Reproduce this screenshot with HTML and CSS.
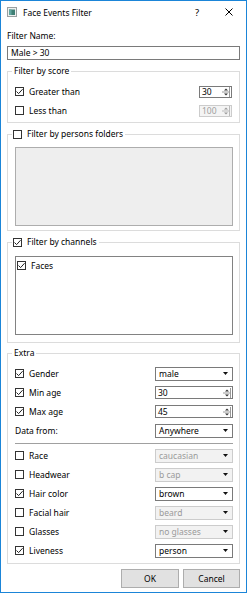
FILE: index.html
```html
<!DOCTYPE html>
<html>
<head>
<meta charset="utf-8">
<link rel="stylesheet" href="styles.css">
</head>
<body>
<div class="window">
  <div class="titlebar">
    <svg class="app-icon" viewBox="0 0 10 10"><rect x="0.5" y="0.5" width="9" height="9" fill="#eef0f0" stroke="#9aa0a0"/><rect x="2" y="2.5" width="6" height="5.5" fill="#3f7f74"/><rect x="2" y="2.5" width="2.5" height="5.5" fill="#62a6a0"/></svg>
    <span class="title">Face Events Filter</span>
    <span class="help">?</span>
    <svg class="close" viewBox="0 0 8 8"><path d="M0.5 0.5 L7.5 7.5 M7.5 0.5 L0.5 7.5" stroke="#000" stroke-width="1"/></svg>
  </div>
  <div class="content">
    <div class="field-label">Filter Name:</div>
    <div class="text-input">Male &gt; 30</div>

    <fieldset class="group group-score">
      <legend>Filter by score</legend>
      <div class="row">
        <span class="check"><span class="box on"><svg viewBox="0 0 9 9"><path d="M1.5 4.5 L3.6 6.6 L7.6 2.2" fill="none" stroke="#222" stroke-width="1"/></svg></span>Greater than</span>
        <div class="spin small"><span class="val">30</span><svg class="spin-btn" viewBox="0 0 8 10"><path d="M2 3.5 L4 1.5 L6 3.5 Z M2 6.5 L4 8.5 L6 6.5 Z" fill="#333"/><path d="M0 5 H7.5 M7.5 0 V10" stroke="#999" stroke-width="1"/></svg></div>
      </div>
      <div class="row">
        <span class="check"><span class="box"></span>Less than</span>
        <div class="spin small disabled"><span class="val">100</span><svg class="spin-btn" viewBox="0 0 8 10"><path d="M2 3.5 L4 1.5 L6 3.5 Z M2 6.5 L4 8.5 L6 6.5 Z" fill="#999"/><path d="M0 5 H7.5 M7.5 0 V10" stroke="#bbb" stroke-width="1"/></svg></div>
      </div>
    </fieldset>

    <fieldset class="group group-folders">
      <legend class="check-legend"><span class="check"><span class="box"></span>Filter by persons folders</span></legend>
      <div class="list-box disabled-box"></div>
    </fieldset>

    <fieldset class="group group-channels">
      <legend class="check-legend"><span class="check"><span class="box on"><svg viewBox="0 0 9 9"><path d="M1.5 4.5 L3.6 6.6 L7.6 2.2" fill="none" stroke="#222" stroke-width="1"/></svg></span>Filter by channels</span></legend>
      <div class="list-box">
        <div class="list-item"><span class="check"><span class="box on"><svg viewBox="0 0 9 9"><path d="M1.5 4.5 L3.6 6.6 L7.6 2.2" fill="none" stroke="#222" stroke-width="1"/></svg></span>Faces</span></div>
      </div>
    </fieldset>

    <fieldset class="group group-extra">
      <legend>Extra</legend>
      <div class="row">
        <span class="check"><span class="box on"><svg viewBox="0 0 9 9"><path d="M1.5 4.5 L3.6 6.6 L7.6 2.2" fill="none" stroke="#222" stroke-width="1"/></svg></span>Gender</span>
        <div class="combo"><span class="val">male</span><svg class="arrow" viewBox="0 0 5 3"><path d="M0 0 H5 L2.5 3 Z" fill="#111"/></svg></div>
      </div>
      <div class="row">
        <span class="check"><span class="box on"><svg viewBox="0 0 9 9"><path d="M1.5 4.5 L3.6 6.6 L7.6 2.2" fill="none" stroke="#222" stroke-width="1"/></svg></span>Min age</span>
        <div class="spin wide"><span class="val">30</span><svg class="spin-btn" viewBox="0 0 8 10"><path d="M2 3.5 L4 1.5 L6 3.5 Z M2 6.5 L4 8.5 L6 6.5 Z" fill="#333"/><path d="M0 5 H7.5 M7.5 0 V10" stroke="#999" stroke-width="1"/></svg></div>
      </div>
      <div class="row">
        <span class="check"><span class="box on"><svg viewBox="0 0 9 9"><path d="M1.5 4.5 L3.6 6.6 L7.6 2.2" fill="none" stroke="#222" stroke-width="1"/></svg></span>Max age</span>
        <div class="spin wide"><span class="val">45</span><svg class="spin-btn" viewBox="0 0 8 10"><path d="M2 3.5 L4 1.5 L6 3.5 Z M2 6.5 L4 8.5 L6 6.5 Z" fill="#333"/><path d="M0 5 H7.5 M7.5 0 V10" stroke="#999" stroke-width="1"/></svg></div>
      </div>
      <div class="row">
        <span class="plain">Data from:</span>
        <div class="combo"><span class="val">Anywhere</span><svg class="arrow" viewBox="0 0 5 3"><path d="M0 0 H5 L2.5 3 Z" fill="#111"/></svg></div>
      </div>
      <div class="sep"></div>
      <div class="row">
        <span class="check"><span class="box"></span>Race</span>
        <div class="combo disabled"><span class="val">caucasian</span><svg class="arrow" viewBox="0 0 5 3"><path d="M0 0 H5 L2.5 3 Z" fill="#111"/></svg></div>
      </div>
      <div class="row">
        <span class="check"><span class="box"></span>Headwear</span>
        <div class="combo disabled"><span class="val">b cap</span><svg class="arrow" viewBox="0 0 5 3"><path d="M0 0 H5 L2.5 3 Z" fill="#111"/></svg></div>
      </div>
      <div class="row">
        <span class="check"><span class="box on"><svg viewBox="0 0 9 9"><path d="M1.5 4.5 L3.6 6.6 L7.6 2.2" fill="none" stroke="#222" stroke-width="1"/></svg></span>Hair color</span>
        <div class="combo"><span class="val">brown</span><svg class="arrow" viewBox="0 0 5 3"><path d="M0 0 H5 L2.5 3 Z" fill="#111"/></svg></div>
      </div>
      <div class="row">
        <span class="check"><span class="box"></span>Facial hair</span>
        <div class="combo disabled"><span class="val">beard</span><svg class="arrow" viewBox="0 0 5 3"><path d="M0 0 H5 L2.5 3 Z" fill="#111"/></svg></div>
      </div>
      <div class="row">
        <span class="check"><span class="box"></span>Glasses</span>
        <div class="combo disabled"><span class="val">no glasses</span><svg class="arrow" viewBox="0 0 5 3"><path d="M0 0 H5 L2.5 3 Z" fill="#111"/></svg></div>
      </div>
      <div class="row">
        <span class="check"><span class="box on"><svg viewBox="0 0 9 9"><path d="M1.5 4.5 L3.6 6.6 L7.6 2.2" fill="none" stroke="#222" stroke-width="1"/></svg></span>Liveness</span>
        <div class="combo"><span class="val">person</span><svg class="arrow" viewBox="0 0 5 3"><path d="M0 0 H5 L2.5 3 Z" fill="#111"/></svg></div>
      </div>
    </fieldset>

    <div class="buttons">
      <div class="btn ok">OK</div>
      <div class="btn cancel">Cancel</div>
    </div>
  </div>
</div>
</body>
</html>
```
FILE: styles.css
```css
* { box-sizing: border-box; }
html, body { margin: 0; padding: 0; }
body {
  width: 247px;
  height: 593px;
  font-family: "Noto Sans", "DejaVu Sans", sans-serif;
  font-size: 8.5px;
  color: #000;
  background: #fff;
  overflow: hidden;
}
.window {
  width: 247px;
  height: 593px;
  border: 1px solid #1b85d8;
  background: #fff;
  display: flex;
  flex-direction: column;
}
.titlebar {
  height: 22px;
  display: flex;
  align-items: center;
  padding-left: 6px;
  flex: none;
}
.app-icon { width: 10px; height: 10px; flex: none; }
.title { margin-left: 6px; flex: 1; }
.help { font-size: 9.5px; margin-right: 26px; }
.close { width: 8px; height: 8px; margin-right: 13px; flex: none; }
.content {
  flex: 1;
  padding: 0 6px;
  display: flex;
  flex-direction: column;
}
.field-label { margin-top: 7px; line-height: 12px; }
.text-input {
  margin-top: 4px;
  height: 14px;
  border: 1px solid #7a7a7a;
  background: #fff;
  line-height: 12px;
  padding-left: 3px;
}
.group {
  margin: 5px 0 0;
  padding: 5px 6px 2px 7px;
  border: 1px solid #dcdcdc;
  min-width: 0;
}
.group legend {
  margin-left: -3px;
  padding: 0 2px;
  line-height: 12px;
  height: 12px;
}
.group legend.check-legend { padding-left: 1px; }
.group-folders { margin-top: 5px; padding-top: 7px; padding-bottom: 4px; }
.group-channels { margin-top: 5px; padding-top: 8px; padding-bottom: 7px; }
.group-extra { margin-top: 4px; padding-bottom: 3px; }
.row {
  height: 19px;
  display: flex;
  align-items: center;
}
.check {
  display: inline-flex;
  align-items: center;
  gap: 5px;
  white-space: nowrap;
}
.box {
  width: 9px;
  height: 9px;
  border: 1px solid #333;
  background: #fff;
  display: inline-block;
  flex: none;
  position: relative;
}
.box svg {
  position: absolute;
  left: -1px;
  top: -1px;
  width: 9px;
  height: 9px;
}
.plain { white-space: nowrap; }
.spin {
  margin-left: auto;
  border: 1px solid #7a7a7a;
  background: #fff;
  display: flex;
  align-items: center;
}
.spin.small { width: 33px; height: 12px; margin-right: 1px; }
.spin.wide { width: 78px; height: 13px; }
.spin .val { flex: 1; padding-left: 2px; line-height: 10px; }
.spin-btn { width: 8px; height: 10px; flex: none; margin-right: 1px; }
.spin.disabled { border-color: #cccccc; background: #f4f4f4; color: #a0a0a0; }
.combo {
  margin-left: auto;
  width: 78px;
  height: 14px;
  border: 1px solid #7a7a7a;
  background: #fff;
  display: flex;
  align-items: center;
  padding-left: 3px;
}
.combo .val { flex: 1; line-height: 12px; }
.combo .arrow { width: 5px; height: 3px; margin-right: 4px; flex: none; }
.combo.disabled { border-color: #cccccc; background: #f2f2f2; color: #9a9a9a; }
.sep {
  margin: 3px 0 2px;
  border-top: 1px solid #a0a0a0;
}
.list-box {
  height: 79px;
  border: 1px solid #828282;
  background: #fff;
}
.list-box.disabled-box { border-color: #adadad; background: #eeeeee; }
.list-item {
  height: 12px;
  display: flex;
  align-items: center;
  margin-top: 2px;
  padding-left: 1px;
}
.buttons {
  display: flex;
  justify-content: flex-end;
  gap: 4px;
  margin-top: 5px;
}
.btn {
  height: 19px;
  border: 1px solid #adadad;
  background: #e1e1e1;
  display: flex;
  align-items: center;
  justify-content: center;
}
.btn.ok { width: 58px; }
.btn.cancel { width: 57px; }
```
